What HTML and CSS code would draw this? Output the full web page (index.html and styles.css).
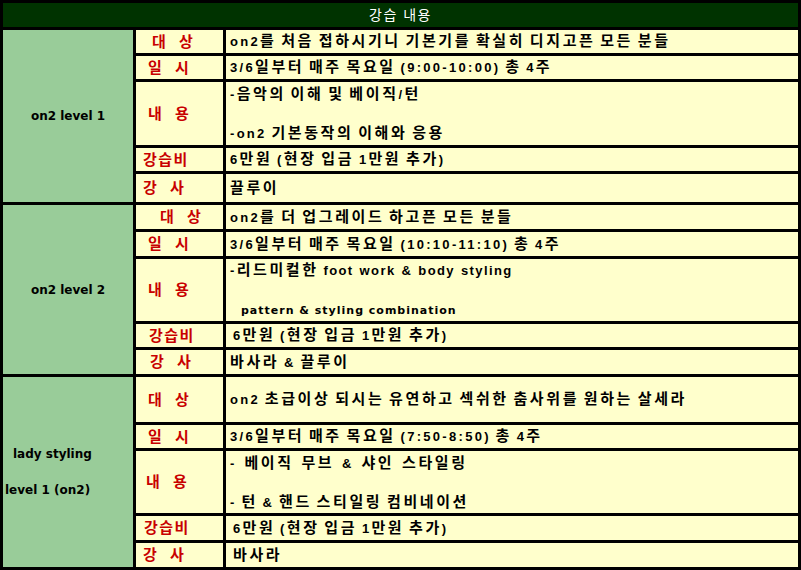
FILE: index.html
```html
<!DOCTYPE html>
<html lang="ko">
<head>
<meta charset="utf-8">
<title>강습 내용</title>
<link rel="stylesheet" href="styles.css">
</head>
<body>
<table class="tbl">
  <colgroup>
    <col class="c1">
    <col class="c2">
    <col class="c3">
  </colgroup>
  <tr class="h24"><td colspan="3" class="hd">강습 내용</td></tr>

  <tr class="h23"><td rowspan="5" class="grp">on2 level 1</td><td class="lb p16">대 상</td><td class="ct"><span class="l">on2</span>를 처음 접하시기니 기본기를 확실히 디지고픈 모든 분들</td></tr>
  <tr class="h23"><td class="lb p12">일 시</td><td class="ct"><span class="l">3/6</span>일부터 매주 목요일 <span class="l">(9:00-10:00)</span> 총 <span class="l">4</span>주</td></tr>
  <tr class="h63"><td class="lb p12">내 용</td><td class="ct multi"><span class="l">-</span>음악의 이해 및 베이직<span class="l">/</span>턴<br><br><span class="l">-on2</span> 기본동작의 이해와 응용</td></tr>
  <tr class="h23"><td class="lb p7">강습비</td><td class="ct"><span class="l">6</span>만원 <span class="l">(</span>현장 입금 <span class="l">1</span>만원 추가<span class="l">)</span></td></tr>
  <tr class="h28"><td class="lb p7">강 사</td><td class="ct">끌루이</td></tr>

  <tr class="h24"><td rowspan="5" class="grp">on2 level 2</td><td class="lb p24">대 상</td><td class="ct"><span class="l">on2</span>를 더 업그레이드 하고픈 모든 분들</td></tr>
  <tr class="h24"><td class="lb p12">일 시</td><td class="ct"><span class="l">3/6</span>일부터 매주 목요일 <span class="l">(10:10-11:10)</span> 총 <span class="l">4</span>주</td></tr>
  <tr class="h62"><td class="lb p12">내 용</td><td class="ct multi"><span class="l">-</span>리드미컬한 <span class="l fw">foot work &amp; body styling</span><br><br><span class="sm">pattern &amp; styling combination</span></td></tr>
  <tr class="h23"><td class="lb p13">강습비</td><td class="ct ind"><span class="l">6</span>만원 <span class="l">(</span>현장 입금 <span class="l">1</span>만원 추가<span class="l">)</span></td></tr>
  <tr class="h24"><td class="lb p14">강 사</td><td class="ct">바사라 <span class="l">&amp;</span> 끌루이</td></tr>

  <tr class="h45"><td rowspan="5" class="grp grp3"><span class="l1">lady styling</span><br><br>level 1 (on2)</td><td class="lb p12">대 상</td><td class="ct"><span class="l">on2</span> 초급이상 되시는 유연하고 섹쉬한 춤사위를 원하는 살세라</td></tr>
  <tr class="h23"><td class="lb p12">일 시</td><td class="ct"><span class="l">3/6</span>일부터 매주 목요일 <span class="l">(7:50-8:50)</span> 총 <span class="l">4</span>주</td></tr>
  <tr class="h62"><td class="lb p10">내 용</td><td class="ct multi"><span class="wd"><span class="l">-</span> 베이직 무브 <span class="l">&amp;</span> 샤인 스타일링</span><br><br><span class="l">-</span> 턴 <span class="l">&amp;</span> 핸드 스티일링 컴비네이션</td></tr>
  <tr class="h24"><td class="lb p8">강습비</td><td class="ct ind"><span class="l">6</span>만원 <span class="l">(</span>현장 입금 <span class="l">1</span>만원 추가<span class="l">)</span></td></tr>
  <tr class="h24"><td class="lb p7">강 사</td><td class="ct ind">바사라</td></tr>
</table>
</body>
</html>
```

FILE: styles.css
```css
html, body {
  margin: 0;
  padding: 0;
  background: #ffffff;
}

.tbl {
  width: 801px;
  border-collapse: separate;
  border-spacing: 3px;
  background: #000000;
  font-family: "Liberation Sans", "Noto Sans CJK KR", sans-serif;
  font-size: 15px;
  font-weight: bold;
  table-layout: fixed;
}

.c1 { width: 130px; }
.c2 { width: 87px; }
.c3 { width: 572px; }

.tbl td {
  padding: 0;
  white-space: nowrap;
  vertical-align: middle;
  overflow: hidden;
  line-height: 18px;
}

.h23 { height: 23px; }
.h24 { height: 24px; }
.h28 { height: 28px; }
.h45 { height: 45px; }
.h62 { height: 62px; }
.h63 { height: 63px; }

.hd {
  background: #003300;
  color: #ffffff;
  text-align: center;
  font-size: 14px;
  font-weight: normal;
  letter-spacing: 1.5px;
}

.grp {
  background: #99cc99;
  color: #000000;
  text-align: center;
  font-family: "DejaVu Sans", sans-serif;
  font-size: 12px;
}

.grp3 {
  text-align: left;
  padding-left: 2px !important;
}

.grp3 .l1 {
  padding-left: 8px;
}

.lb {
  background: #ffffcc;
  color: #c80000;
  letter-spacing: 1.5px;
  word-spacing: 6px;
}

.p7 { padding-left: 7px !important; }
.p8 { padding-left: 8px !important; }
.p10 { padding-left: 10px !important; }
.p12 { padding-left: 12px !important; }
.p13 { padding-left: 13px !important; }
.p14 { padding-left: 14px !important; }
.p16 { padding-left: 16px !important; }
.p24 { padding-left: 24px !important; }

.ct {
  background: #ffffcc;
  color: #000000;
  padding-left: 4px !important;
  letter-spacing: 2.6px;
  word-spacing: -2px;
}

.ct.ind {
  padding-left: 7px !important;
}

.ct.multi {
  line-height: 19px;
}

.l {
  font-size: 13px;
  letter-spacing: 2.3px;
}

.fw {
  letter-spacing: 1.4px;
  word-spacing: 1px;
}

.wd {
  word-spacing: 1px;
}

.sm {
  font-family: "DejaVu Sans", sans-serif;
  font-size: 11px;
  letter-spacing: 1px;
  word-spacing: 0;
  padding-left: 11px;
}
```
